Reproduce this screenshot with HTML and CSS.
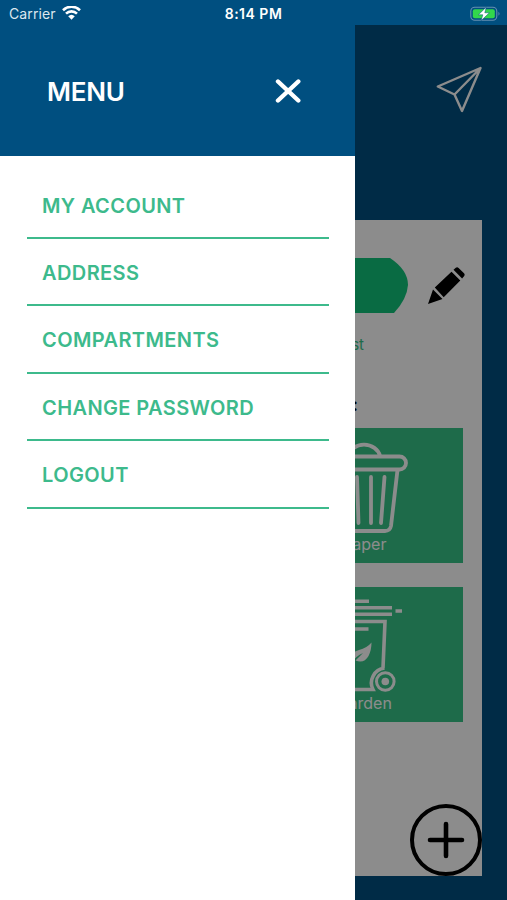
FILE: index.html
```html
<!DOCTYPE html>
<html lang="en">
<head>
    <meta charset="UTF-8">
    <meta name="viewport" content="width=device-width, initial-scale=1.0">
    <title>Menu</title>
    <link rel="stylesheet" href="styles.css">
</head>
<body>
    <header class="status-bar">
        <div class="carrier">
            <span>Carrier</span>
            <svg class="wifi-icon" width="19" height="14" viewBox="0 0 19 14">
                <path d="M1 4.2a12.2 12.2 0 0 1 17 0M4 7.6a8 8 0 0 1 11 0" fill="none" stroke="#fff" stroke-width="2.6"/>
                <path d="M6.2 10.2a4.8 4.8 0 0 1 6.6 0L9.5 13.7z" fill="#fff"/>
            </svg>
        </div>
        <span class="clock">8:14 PM</span>
        <div class="battery">
            <svg width="31" height="16" viewBox="0 0 31 16">
                <rect x=".8" y="1.2" width="26" height="13" rx="4" fill="none" stroke="#6690b0" stroke-width="1.1"/>
                <rect x="2.8" y="3.2" width="22" height="9" rx="2" fill="#32d74b"/>
                <path d="M28.5 5.7q2 2 0 4z" fill="#6690b0"/>
                <path d="M16.2 1.2L8.4 8.8h4.4l-1.6 5.8 8.2-7.8h-4.6z" fill="#fff" stroke="#004f80" stroke-width=".5"/>
            </svg>
        </div>
    </header>

    <div class="screen">
        <main class="page">
            <div class="page-header">
                <svg class="send-icon" width="46" height="47" viewBox="0 0 46 47">
                    <path d="M1.8 20.5L44.5 2 26 45 18.5 28.5zM18.5 28.5L44.5 2" fill="none" stroke="#fff" stroke-width="2.4" stroke-linejoin="round"/>
                </svg>
            </div>
            <div class="card">
                <div class="name-row">
                    <svg class="pill" width="308" height="55" viewBox="0 0 308 55">
                        <path d="M18 0H290Q308 12 308 27 307 41 294 55H14Q1 41 0 27 0 12 18 0z" fill="#12c37a"/>
                    </svg>
                    <svg class="pencil-icon" width="37" height="38" viewBox="0 0 37 38">
                        <path d="M0 37L5 22.5 14.5 32zM6.8 20.5L23.5 4.7 32.3 13.5 15.7 30.2zM25.5 2.8L27.8.8Q29.2-.3 30.6 1L36 6.3Q37.2 7.6 36.2 9L34.1 11.5z"/>
                    </svg>
                </div>
                <p class="link-text">st</p>
                <p class="section-title">:</p>
                <div class="tiles">
                    <div class="tile"></div>
                    <div class="tile">
                        <svg width="88" height="96" viewBox="0 0 88 96">
                            <g fill="none" stroke="#fff" stroke-width="3.8" stroke-linecap="round" stroke-linejoin="round">
                                <path d="M28 16a16.3 14 0 0 1 32 0"/>
                                <rect x="2" y="16.5" width="84" height="13" rx="6.5"/>
                                <path d="M11 30L17 86Q18 91 23 91H65Q70 91 71 86L77.5 30M51 37V83M64.5 37L61 83M37 37L38.5 83M23.5 37L27 83"/>
                            </g>
                        </svg>
                        <span>Paper</span>
                    </div>
                    <div class="tile"></div>
                    <div class="tile">
                        <svg width="88" height="96" viewBox="0 0 88 96">
                            <g fill="none" stroke="#fff" stroke-width="3.6">
                                <path d="M10 2.2H49M5 8.8H72M5 15.2H72M75.5 12H82M10 30H48.5"/>
                                <path d="M64.5 69A15 15 0 0 0 53 90.5H16L10 22.5H65L63 69"/>
                                <circle cx="65.3" cy="82.5" r="8.8" stroke-width="3"/>
                            </g>
                            <circle cx="65.3" cy="82.5" r="3.8" fill="#fff"/>
                            <path d="M51.5 43.5Q47 49 39 51 29 54 29 61L31 64Q36 57 43 54 39 58 35.5 61.5 44 65 48.5 57 51.5 51 51.5 43.5z" fill="#fff"/>
                        </svg>
                        <span>Garden</span>
                    </div>
                </div>
            </div>
            <svg class="add-button" width="72" height="72" viewBox="0 0 72 72">
                <path d="M36 20V52M20 36H52" stroke="#000" stroke-width="4.6" stroke-linecap="round"/>
                <circle cx="36" cy="36" r="34" fill="none" stroke="#000" stroke-width="4"/>
            </svg>
        </main>
        <div class="backdrop"></div>

        <nav class="drawer">
            <div class="drawer-header">
                <h1>MENU</h1>
                <svg class="close-icon" width="26" height="24" viewBox="0 0 26 24">
                    <path d="M3 2.5L23.3 21.5M23.3 2.5L3 21.5" stroke="#fff" stroke-width="4.4" stroke-linecap="round"/>
                </svg>
            </div>
            <ul class="menu">
                <li><a href="#">MY ACCOUNT</a></li>
                <li><a href="#">ADDRESS</a></li>
                <li><a href="#">COMPARTMENTS</a></li>
                <li><a href="#">CHANGE PASSWORD</a></li>
                <li><a href="#">LOGOUT</a></li>
            </ul>
        </nav>
    </div>
</body>
</html>
```
FILE: styles.css
```css
* {
    box-sizing: border-box;
}

body {
    margin: 0;
    height: 900px;
    background: #004f80;
    font-family: Inter, "Liberation Sans", sans-serif;
    overflow: hidden;
}

/* Status bar */
.status-bar {
    display: grid;
    grid-template-columns: 1fr auto 1fr;
    align-items: center;
    height: 25px;
    padding: 2px 6px 0 9px;
    color: white;
    font-size: 14px;
}

.carrier {
    display: flex;
    align-items: center;
    gap: 6px;
    color: #dce7ef;
    letter-spacing: 0.1px;
}

.wifi-icon {
    margin-top: -2px;
}

.clock {
    margin-right: 3px;
    font-weight: 600;
    font-size: 14px;
    letter-spacing: 0.5px;
}

.battery {
    display: flex;
    justify-content: flex-end;
}

.screen {
    position: relative;
    height: 875px;
}

/* Page behind the drawer */
.page {
    height: 875px;
    padding: 0 25px;
}

.page-header {
    display: flex;
    justify-content: flex-end;
    height: 195px;
    padding-top: 41px;
}

.card {
    height: 656px;
    padding: 38px 19px 0;
    background: white;
}

.name-row {
    display: flex;
    justify-content: flex-end;
    gap: 20px;
    margin-right: -2px;
}

.pill {
    flex-shrink: 0;
}

.pencil-icon {
    flex-shrink: 0;
    margin-top: 9px;
}

.link-text {
    margin: 22px 99px 0 0;
    font-size: 15px;
    line-height: 20px;
    text-align: right;
    color: #38c488;
}

.section-title {
    margin: 39px 105px 0 0;
    font-size: 18px;
    font-weight: 600;
    line-height: 22px;
    text-align: right;
}

.tiles {
    display: grid;
    grid-template-columns: 1fr 1fr;
    gap: 24px;
    margin-top: 12px;
}

.tile {
    display: flex;
    flex-direction: column;
    align-items: center;
    height: 135px;
    padding-top: 12px;
    background: #38c488;
    color: white;
    font-size: 16px;
    line-height: 16px;
}

.add-button {
    position: absolute;
    right: 25px;
    bottom: 24px;
}

.backdrop {
    position: absolute;
    inset: 0;
    background: rgba(0, 0, 0, 0.45);
}

/* Drawer */
.drawer {
    position: absolute;
    top: 0;
    left: 0;
    width: 355px;
    height: 875px;
    background: white;
}

.drawer-header {
    display: flex;
    justify-content: space-between;
    align-items: center;
    height: 131px;
    padding: 1px 54px 0 47px;
    background: #004f80;
    color: white;
}

.drawer-header h1 {
    margin: 0;
    font-size: 26px;
    font-weight: 600;
    letter-spacing: -0.2px;
}

.menu {
    margin: 0;
    padding: 15.6px 26px 0 27px;
    list-style: none;
}

.menu li {
    height: 67.4px;
    padding: 22px 15px 0;
    border-bottom: 2px solid #3dba8c;
}

.menu a {
    color: #3dba8c;
    font-size: 20px;
    font-weight: 600;
    line-height: 25px;
    letter-spacing: 0.4px;
    text-decoration: none;
}
```
